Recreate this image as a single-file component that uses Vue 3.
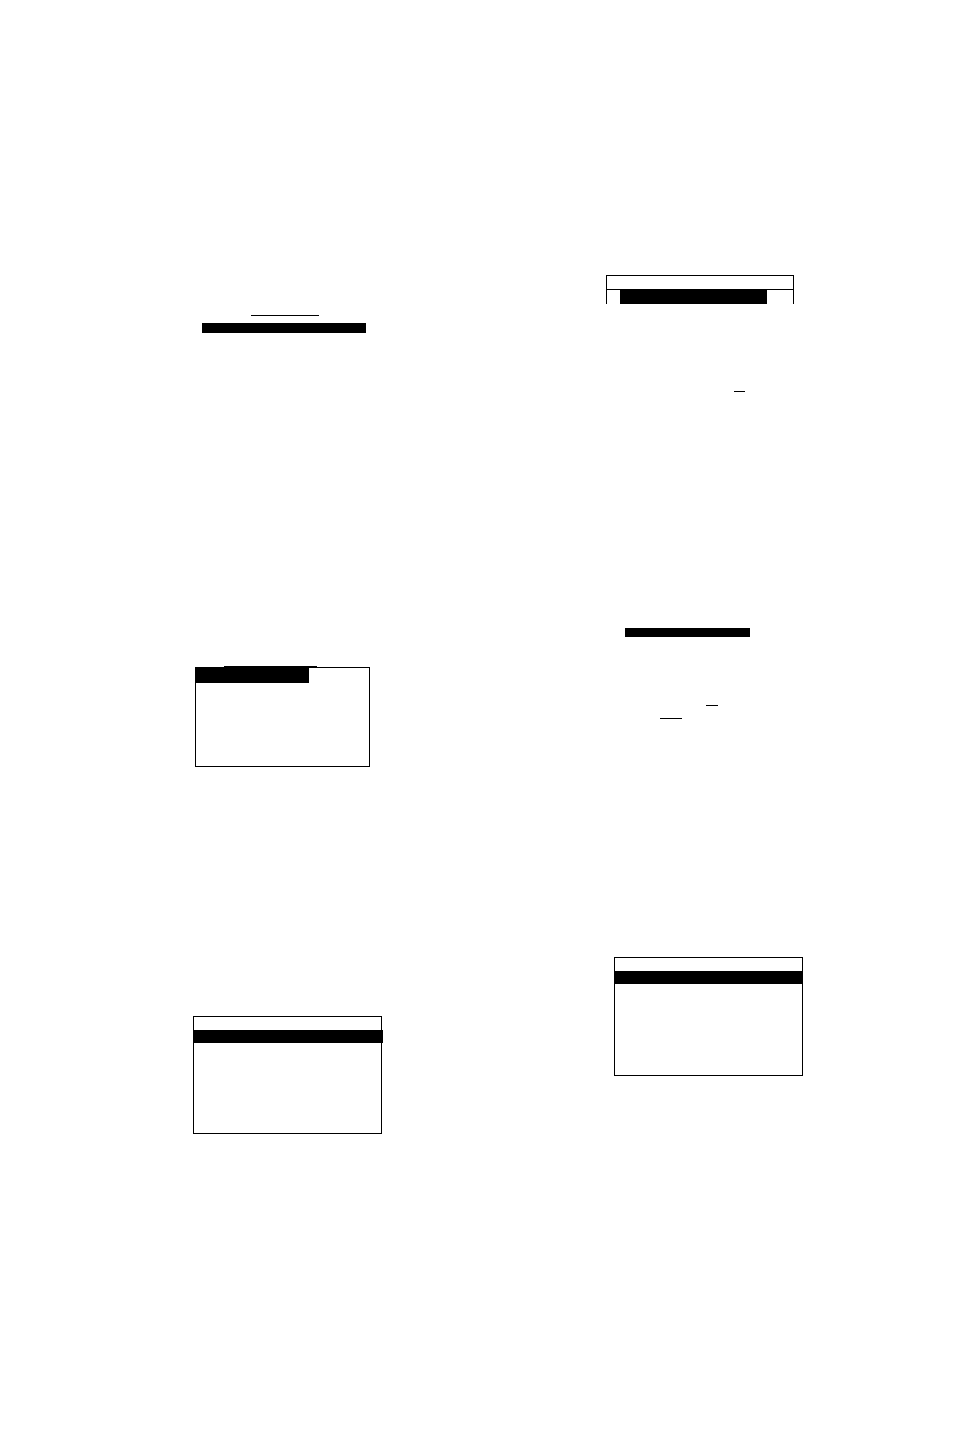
<script setup>
</script>

<template>
  <main class="page">
    <section class="column left">
      <div class="rule title-rule"></div>
      <div class="bar title-bar"></div>

      <div class="rule tab-rule"></div>
      <div class="panel tab-panel">
        <div class="bar tab"></div>
      </div>

      <div class="panel menu-panel">
        <div class="heading"></div>
        <div class="bar selected wide"></div>
      </div>
    </section>

    <section class="column right">
      <div class="panel open-panel">
        <div class="heading"></div>
        <div class="row">
          <div class="bar"></div>
        </div>
      </div>
      <div class="rule key-rule"></div>

      <div class="bar option-bar"></div>
      <div class="rule short-rule"></div>
      <div class="rule word-rule"></div>

      <div class="panel list-panel">
        <div class="heading"></div>
        <div class="bar selected"></div>
      </div>
    </section>
  </main>
</template>

<style>
  body {
    margin: 0;
    background-color: #fff;
  }
</style>

<style scoped>
  .page {
    display: grid;
    grid-template-columns: 1fr 1fr;
    min-height: 100vh;
    background-color: #fff;
  }
  .column {
    display: flex;
    flex-direction: column;
    align-items: flex-start;
    min-width: 0;
  }
  .left {
    padding: 315px 0 0 193px;
  }
  .right {
    padding: 275px 0 0 129px;
  }
  .bar {
    background-color: #000;
  }
  .rule {
    height: 1px;
    background-color: #000;
  }
  .panel {
    box-sizing: border-box;
    border: 1px solid #000;
  }
  .heading {
    height: 13px;
  }
  .selected {
    height: 13px;
  }
  /* the highlight runs just past the frame */
  .wide {
    margin-right: -2px;
  }

  .title-rule {
    width: 68px;
    margin-left: 58px;
  }
  .title-bar {
    width: 164px;
    height: 10px;
    margin: 7px 0 0 9px;
  }
  .tab-rule {
    width: 93px;
    margin: 333px 0 0 31px;
  }
  .tab-panel {
    width: 175px;
    height: 100px;
    margin-left: 2px;
  }
  .tab {
    width: 113px;
    height: 15px;
  }
  .menu-panel {
    width: 189px;
    height: 118px;
    margin-top: 249px;
  }

  .open-panel {
    width: 188px;
    border-bottom: none;
  }
  .row {
    border-top: 1px solid #000;
    padding-left: 13px;
  }
  .row .bar {
    width: 147px;
    height: 14px;
  }
  .key-rule {
    width: 11px;
    margin: 87px 0 0 128px;
  }
  .option-bar {
    width: 125px;
    height: 9px;
    margin: 236px 0 0 19px;
  }
  .short-rule {
    width: 12px;
    margin: 68px 0 0 100px;
  }
  .word-rule {
    width: 22px;
    margin: 12px 0 0 54px;
  }
  .list-panel {
    width: 189px;
    height: 119px;
    margin: 238px 0 0 8px;
  }
</style>
